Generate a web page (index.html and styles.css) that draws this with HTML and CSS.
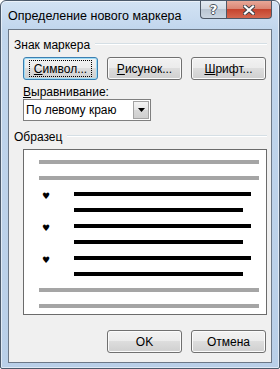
FILE: index.html
```html
<!DOCTYPE html>
<html lang="ru">
<head>
    <meta charset="UTF-8">
    <title>Определение нового маркера</title>
    <link rel="stylesheet" href="styles.css">
</head>
<body>
    <div class="window">
        <div class="titlebar">
            <span class="title">Определение нового маркера</span>
            <div class="caption-buttons">
                <span class="cap-btn help">?</span>
                <span class="cap-btn close">
                    <svg width="12" height="10" viewBox="0 0 12 10">
                        <path d="M2 1.5 L10 8.5 M10 1.5 L2 8.5" stroke="#3a3f47" stroke-width="4" stroke-linecap="square"/>
                        <path d="M2 1.5 L10 8.5 M10 1.5 L2 8.5" stroke="#fff" stroke-width="2.2" stroke-linecap="square"/>
                    </svg>
                </span>
            </div>
        </div>

        <div class="client">
            <div class="group-head"><span>Знак маркера</span></div>
            <div class="section btn-row">
                <button class="btn focused"><u>С</u>имвол...</button>
                <button class="btn"><u>Р</u>исунок...</button>
                <button class="btn"><u>Ш</u>рифт...</button>
            </div>
            <div class="section label"><u>В</u>ыравнивание:</div>
            <div class="section select">
                <span class="select-text">По левому краю</span>
                <span class="drop">
                    <svg width="7" height="4" viewBox="0 0 7 4"><path d="M0 0 H7 L3.5 4 Z" fill="#000"/></svg>
                </span>
            </div>

            <div class="group-head second"><span>Образец</span></div>
            <div class="section sample">
                <div class="row"><div class="line gray"></div></div>
                <div class="row"><div class="line gray"></div></div>
                <div class="row"><span class="bullet">♥</span><div class="line black long"></div></div>
                <div class="row"><span class="bullet"></span><div class="line black short"></div></div>
                <div class="row"><span class="bullet">♥</span><div class="line black long"></div></div>
                <div class="row"><span class="bullet"></span><div class="line black short"></div></div>
                <div class="row"><span class="bullet">♥</span><div class="line black long"></div></div>
                <div class="row"><span class="bullet"></span><div class="line black short"></div></div>
                <div class="row"><div class="line gray"></div></div>
                <div class="row"><div class="line gray"></div></div>
            </div>

            <div class="btn-row footer">
                <button class="btn">OK</button>
                <button class="btn">Отмена</button>
            </div>
        </div>
    </div>
</body>
</html>
```

FILE: styles.css
```css
body {
    margin: 0;
    font-family: "Liberation Sans", Arial, sans-serif;
    font-size: 12px;
    color: #000;
}

.window {
    width: 280px;
    height: 369px;
    box-sizing: border-box;
    border: 1px solid #4c5a6b;
    border-radius: 6px 6px 2px 2px;
    background: linear-gradient(#d3e3f4, #c0d5ec 30px, #b9cfe8);
    box-shadow: inset 0 0 0 1px rgba(255, 255, 255, 0.55);
    padding: 0 7px 5px 7px;
    display: flex;
    flex-direction: column;
}

.titlebar {
    height: 28px;
    flex-shrink: 0;
    display: flex;
    justify-content: space-between;
}
.title {
    margin-top: 8px;
    line-height: 15px;
    font-size: 12.5px;
}
.caption-buttons {
    display: flex;
    align-self: flex-start;
}
.cap-btn {
    height: 18px;
    box-sizing: border-box;
    border: 1px solid #4d5866;
    border-top: none;
    display: flex;
    align-items: center;
    justify-content: center;
}
.help {
    width: 26px;
    border-right: none;
    border-radius: 0 0 0 4px;
    background: linear-gradient(#e3eaf2, #d2dbe5 50%, #b9c5d2 50%, #cad5e1);
    color: #fff;
    font-family: "DejaVu Sans", sans-serif;
    font-weight: bold;
    font-size: 13px;
    line-height: 13px;
    text-shadow: 1px 0 #4a525c, -1px 0 #4a525c, 0 1px #4a525c, 0 -1px #4a525c;
}
.close {
    width: 46px;
    border-radius: 0 0 4px 0;
    background: linear-gradient(#e8a797, #d98371 50%, #c6442e 50%, #d4674f);
}

.client {
    flex: 1;
    border: 1px solid #6c7887;
    background: #f0f0f0;
    padding: 0 4px 9px 5px;
    display: flex;
    flex-direction: column;
}

.group-head {
    display: flex;
    margin-top: 8px;
    line-height: 15px;
}
.group-head::after {
    content: "";
    flex: 1;
    height: 1px;
    margin: 5px 0 0 5px;
    background: #d5dfe5;
    box-shadow: 0 1px 0 #fff;
}
.group-head.second {
    margin-top: 9px;
}

.section {
    margin-left: 9px;
}

.btn-row {
    display: flex;
    gap: 9px;
    margin-top: 4px;
}
.btn {
    position: relative;
    width: 75px;
    height: 23px;
    box-sizing: border-box;
    padding: 0;
    border: 1px solid #707070;
    border-radius: 3px;
    background: linear-gradient(#f2f2f2, #ebebeb 50%, #dddddd 50%, #cfcfcf);
    box-shadow: inset 0 0 0 1px #fbfbfb;
    font: inherit;
    color: #000;
}
.btn.focused {
    border-color: #3c7fb1;
    box-shadow: inset 0 0 0 1px #9fdcf6;
}
.btn.focused::after {
    content: "";
    position: absolute;
    top: 2px;
    bottom: 2px;
    left: 5px;
    right: 5px;
    border: 1px dotted #000;
}

.label {
    margin-top: 5px;
    line-height: 14px;
}

.select {
    width: 128px;
    height: 22px;
    box-sizing: border-box;
    border: 1px solid #7f7f7f;
    background: #fff;
    display: flex;
    align-items: center;
}
.select-text {
    flex: 1;
    padding-left: 2px;
}
.drop {
    width: 16px;
    height: 18px;
    margin-right: 1px;
    box-sizing: border-box;
    border: 1px solid #a3a3a3;
    background: linear-gradient(#f4f4f4, #e6e6e6 50%, #d8d8d8 50%, #cfcfcf);
    display: flex;
    align-items: center;
    justify-content: center;
}

.sample {
    margin-top: 4px;
    height: 166px;
    box-sizing: border-box;
    border: 1px solid #6b6b6b;
    background: #fff;
    padding-top: 10px;
}
.row {
    height: 16px;
    display: flex;
    align-items: flex-start;
}
.line {
    height: 4px;
}
.line.gray {
    margin-left: 15px;
    width: 220px;
    background: #a5a5a5;
}
.line.black {
    background: #000;
}
.line.long {
    width: 177px;
}
.line.short {
    width: 169px;
}
.bullet {
    width: 32px;
    padding-left: 18px;
    font-family: "DejaVu Sans", sans-serif;
    font-size: 9px;
    line-height: 8px;
}

.footer {
    margin-top: auto;
    justify-content: flex-end;
    padding-right: 1px;
}
```
